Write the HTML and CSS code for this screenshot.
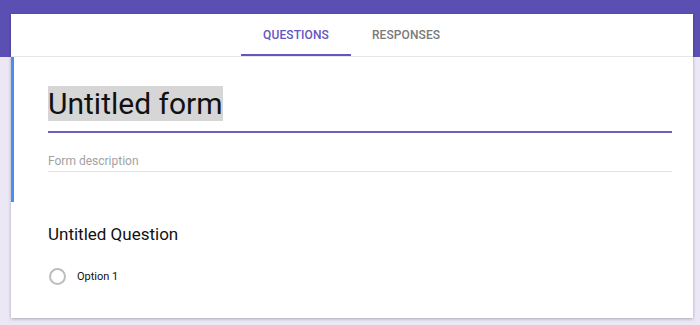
FILE: index.html
```html
<!DOCTYPE html>
<html>
<head>
<meta charset="utf-8">
<link rel="stylesheet" href="styles.css">
</head>
<body>
<div class="page">
  <div class="card">
    <div class="tabs">
      <div class="tab active">Questions</div>
      <div class="tab">Responses</div>
    </div>
    <div class="head-section">
      <div class="title"><span class="title-text">Untitled form</span></div>
      <div class="desc">Form description</div>
    </div>
    <div class="question">
      <div class="q-title">Untitled Question</div>
      <div class="option">
        <span class="radio"></span>
        <span class="opt-label">Option 1</span>
      </div>
    </div>
  </div>
</div>
</body>
</html>
```
FILE: styles.css
```css
html, body {
  margin: 0;
  padding: 0;
}
body {
  font-family: Roboto, "Noto Sans", Arial, sans-serif;
  background: #ebe7f5;
  width: 700px;
  height: 325px;
  overflow: hidden;
}
.page {
  background: linear-gradient(to bottom, #5c4fb4 0, #5c4fb4 57px, #ebe7f5 57px);
  padding: 14px 7px 8px 11px;
  height: 325px;
  box-sizing: border-box;
}
.card {
  background: #fff;
  box-shadow: 0 1px 3px rgba(0, 0, 0, 0.28);
}
.tabs {
  display: flex;
  justify-content: center;
  height: 42px;
  border-bottom: 1px solid #e6e6e6;
  padding-right: 2px;
}
.tab {
  width: 110px;
  display: flex;
  align-items: center;
  justify-content: center;
  font-size: 12px;
  font-weight: 500;
  text-transform: uppercase;
  color: #7a7a7a;
  letter-spacing: 0.1px;
}
.tab.active {
  color: #6456c2;
  box-shadow: inset 0 -2px 0 #6456c2;
}
.head-section {
  border-left: 3px solid #4a8ef5;
  padding: 29px 21px 30px 34px;
}
.title {
  font-size: 30px;
  line-height: 36px;
  color: #111;
  padding-bottom: 9px;
  border-bottom: 2px solid #6b5ec6;
}
.title-text {
  background: #d6d6d6;
}
.desc {
  margin-top: 20px;
  padding-bottom: 2px;
  font-size: 12px;
  line-height: 16px;
  color: #a2a2a2;
  border-bottom: 1px solid #e3e3e3;
}
.question {
  padding: 22px 21px 32px 37px;
}
.q-title {
  font-size: 17px;
  line-height: 20px;
  color: #111;
}
.option {
  margin-top: 22px;
  height: 20px;
  display: flex;
  align-items: center;
}
.radio {
  width: 17px;
  height: 17px;
  box-sizing: border-box;
  border: 2px solid #bdbdbd;
  border-radius: 50%;
  margin-left: 1px;
}
.opt-label {
  margin-left: 11px;
  font-size: 11px;
  color: #111;
}
```
